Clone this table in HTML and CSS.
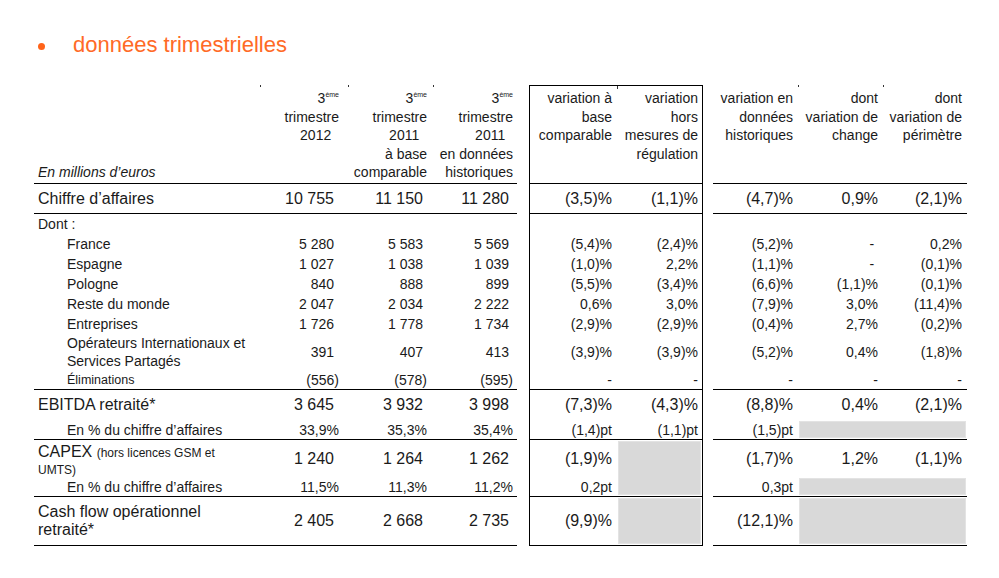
FILE: index.html
```html
<!DOCTYPE html>
<html lang="fr">
<head>
<meta charset="utf-8">
<title>données trimestrielles</title>
<link rel="stylesheet" href="styles.css">
</head>
<body>
<div class="title"><span class="bullet"></span><h1>données trimestrielles</h1></div>
<table class="fin">
  <colgroup>
    <col class="w-label"><col class="w-c1"><col class="w-c2"><col class="w-c3"><col class="w-gap1"><col class="w-c4"><col class="w-c5"><col class="w-gap2"><col class="w-c6"><col class="w-c7"><col class="w-c8">
  </colgroup>
  <thead>
    <tr class="hd rule">
      <th class="lbl"><em>En millions d’euros</em></th>
      <th class="c1 tick">3<sup>ème</sup><br>trimestre<br>2012&nbsp;&nbsp;</th>
      <th class="c2 tick">3<sup>ème</sup><br>trimestre<br>2011&nbsp;&nbsp;<br>à base<br>comparable</th>
      <th class="c3 tick">3<sup>ème</sup><br>trimestre<br>2011&nbsp;&nbsp;<br>en données<br>historiques</th>
      <th class="gap"></th>
      <th class="c4 box">variation à<br>base<br>comparable</th>
      <th class="c5 box tick">variation<br>hors<br>mesures de<br>régulation</th>
      <th class="gap"></th>
      <th class="c6">variation en<br>données<br>historiques</th>
      <th class="c7 tick">dont<br>variation de<br>change</th>
      <th class="c8 tick">dont<br>variation de<br>périmètre</th>
    </tr>
  </thead>
  <tbody>
    <tr class="big r30 rule">
      <td class="lbl">Chiffre d’affaires</td>
      <td class="c1">10 755</td><td class="c2">11 150</td><td class="c3">11 280</td><td class="gap"></td>
      <td class="c4">(3,5)%</td><td class="c5">(1,1)%</td><td class="gap"></td>
      <td class="c6">(4,7)%</td><td class="c7">0,9%</td><td class="c8">(2,1)%</td>
    </tr>
    <tr class="r20">
      <td class="lbl">Dont :</td>
      <td class="c1"></td><td class="c2"></td><td class="c3"></td><td class="gap"></td>
      <td class="c4"></td><td class="c5"></td><td class="gap"></td>
      <td class="c6"></td><td class="c7"></td><td class="c8"></td>
    </tr>
    <tr class="r20">
      <td class="lbl ind">France</td>
      <td class="c1">5 280</td><td class="c2">5 583</td><td class="c3">5 569</td><td class="gap"></td>
      <td class="c4">(5,4)%</td><td class="c5">(2,4)%</td><td class="gap"></td>
      <td class="c6">(5,2)%</td><td class="c7">-&nbsp;</td><td class="c8">0,2%</td>
    </tr>
    <tr class="r20">
      <td class="lbl ind">Espagne</td>
      <td class="c1">1 027</td><td class="c2">1 038</td><td class="c3">1 039</td><td class="gap"></td>
      <td class="c4">(1,0)%</td><td class="c5">2,2%</td><td class="gap"></td>
      <td class="c6">(1,1)%</td><td class="c7">-&nbsp;</td><td class="c8">(0,1)%</td>
    </tr>
    <tr class="r20">
      <td class="lbl ind">Pologne</td>
      <td class="c1">840</td><td class="c2">888</td><td class="c3">899</td><td class="gap"></td>
      <td class="c4">(5,5)%</td><td class="c5">(3,4)%</td><td class="gap"></td>
      <td class="c6">(6,6)%</td><td class="c7">(1,1)%</td><td class="c8">(0,1)%</td>
    </tr>
    <tr class="r20">
      <td class="lbl ind">Reste du monde</td>
      <td class="c1">2 047</td><td class="c2">2 034</td><td class="c3">2 222</td><td class="gap"></td>
      <td class="c4">0,6%</td><td class="c5">3,0%</td><td class="gap"></td>
      <td class="c6">(7,9)%</td><td class="c7">3,0%</td><td class="c8">(11,4)%</td>
    </tr>
    <tr class="r20">
      <td class="lbl ind">Entreprises</td>
      <td class="c1">1 726</td><td class="c2">1 778</td><td class="c3">1 734</td><td class="gap"></td>
      <td class="c4">(2,9)%</td><td class="c5">(2,9)%</td><td class="gap"></td>
      <td class="c6">(0,4)%</td><td class="c7">2,7%</td><td class="c8">(0,2)%</td>
    </tr>
    <tr class="r36">
      <td class="lbl ind">Opérateurs Internationaux et<br>Services Partagés</td>
      <td class="c1">391</td><td class="c2">407</td><td class="c3">413</td><td class="gap"></td>
      <td class="c4">(3,9)%</td><td class="c5">(3,9)%</td><td class="gap"></td>
      <td class="c6">(5,2)%</td><td class="c7">0,4%</td><td class="c8">(1,8)%</td>
    </tr>
    <tr class="r20 rule">
      <td class="lbl ind small">Éliminations</td>
      <td class="c1 h">(556)</td><td class="c2 h">(578)</td><td class="c3 h">(595)</td><td class="gap"></td>
      <td class="c4">-</td><td class="c5">-</td><td class="gap"></td>
      <td class="c6">-</td><td class="c7">-</td><td class="c8">-</td>
    </tr>
    <tr class="big r30">
      <td class="lbl">EBITDA retraité*</td>
      <td class="c1">3 645</td><td class="c2">3 932</td><td class="c3">3 998</td><td class="gap"></td>
      <td class="c4">(7,3)%</td><td class="c5">(4,3)%</td><td class="gap"></td>
      <td class="c6">(8,8)%</td><td class="c7">0,4%</td><td class="c8">(2,1)%</td>
    </tr>
    <tr class="r20 rule">
      <td class="lbl ind">En % du chiffre d’affaires</td>
      <td class="c1 h">33,9%</td><td class="c2 h">35,3%</td><td class="c3 h">35,4%</td><td class="gap"></td>
      <td class="c4">(1,4)pt</td><td class="c5">(1,1)pt</td><td class="gap"></td>
      <td class="c6">(1,5)pt</td><td class="grey" colspan="2"></td>
    </tr>
    <tr class="big r37">
      <td class="lbl capex">CAPEX <small>(hors licences GSM et<br>UMTS)</small></td>
      <td class="c1">1 240</td><td class="c2">1 264</td><td class="c3">1 262</td><td class="gap"></td>
      <td class="c4">(1,9)%</td><td class="c5 grey rb" rowspan="2"></td><td class="gap"></td>
      <td class="c6">(1,7)%</td><td class="c7">1,2%</td><td class="c8">(1,1)%</td>
    </tr>
    <tr class="r20 rule">
      <td class="lbl ind">En % du chiffre d’affaires</td>
      <td class="c1 h">11,5%</td><td class="c2 h">11,3%</td><td class="c3 h">11,2%</td><td class="gap"></td>
      <td class="c4">0,2pt</td><td class="gap"></td>
      <td class="c6">0,3pt</td><td class="grey" colspan="2"></td>
    </tr>
    <tr class="big r49 rule">
      <td class="lbl">Cash flow opérationnel<br>retraité*</td>
      <td class="c1">2 405</td><td class="c2">2 668</td><td class="c3">2 735</td><td class="gap"></td>
      <td class="c4">(9,9)%</td><td class="c5 grey"></td><td class="gap"></td>
      <td class="c6">(12,1)%</td><td class="grey" colspan="2"></td>
    </tr>
  </tbody>
</table>
</body>
</html>
```

FILE: styles.css
```css
* { box-sizing: border-box; }
html, body { margin: 0; padding: 0; background: #fff; }
body {
  width: 999px;
  height: 578px;
  overflow: hidden;
  font-family: "Liberation Sans", Arial, Helvetica, sans-serif;
  color: #1a1a1a;
}

.title {
  display: flex;
  align-items: flex-start;
  height: 85px;
  padding: 32px 0 0 38px;
}
.bullet {
  width: 7px;
  height: 7px;
  border-radius: 50%;
  background: #ff6319;
  margin: 10.5px 28px 0 0;
  flex: none;
}
.title h1 {
  margin: 0;
  font-size: 22px;
  line-height: 26px;
  font-weight: normal;
  color: #ff6a26;
}

.fin {
  border-collapse: separate;
  border-spacing: 0;
  table-layout: fixed;
  width: 933px;
  margin-left: 34px;
  font-size: 14px;
  line-height: 18px;
}
.w-label { width: 226px; }
.w-c1 { width: 88px; }
.w-c2 { width: 85px; }
.w-c3 { width: 84px; }
.w-gap1 { width: 12px; }
.w-c4 { width: 88px; }
.w-c5 { width: 86px; }
.w-gap2 { width: 10px; }
.w-c6 { width: 85px; }
.w-c7 { width: 85px; }
.w-c8 { width: 84px; }

.fin th, .fin td {
  padding: 0;
  font-weight: normal;
  text-align: right;
  vertical-align: middle;
  white-space: nowrap;
}

/* header */
.fin tr.hd { height: 99px; }
.fin tr.hd th { vertical-align: top; padding-top: 4px; line-height: 18.5px; position: relative; }
.fin tr.hd th.box { padding-top: 3px; border-top: 1px solid #000; }
.fin tr.hd th.lbl { vertical-align: bottom; padding-bottom: 2px; }
.fin th sup { font-size: 7px; line-height: 0; vertical-align: 6px; }
.fin em { font-style: italic; }

/* small column-boundary ticks at the top of the table */
.fin th.tick::before {
  content: "";
  position: absolute;
  left: 0;
  top: 0;
  width: 1px;
  height: 2px;
  background: #333;
}
.fin th.box.tick::before { top: 0; height: 3px; }

/* row heights */
.fin tr.r20 { height: 20px; }
.fin tr.r30 { height: 30px; }
.fin tr.r36 { height: 36px; }
.fin tr.r37 { height: 37px; }
.fin tr.r49 { height: 49px; }

.fin tr.big td { font-size: 16px; }

/* label column */
.fin .lbl { text-align: left; padding-left: 4px; }
.fin .lbl.ind { padding-left: 33px; }
.fin .lbl.small { font-size: 12.5px; }
.fin .lbl.capex { line-height: 17px; padding-top: 2px; }
.fin .lbl.capex small { font-size: 12px; line-height: 12px; }

/* numeric columns: right padding, with hanging ) and % */
.fin .c1 { padding-right: 14px; }
.fin .c2 { padding-right: 10px; }
.fin .c3 { padding-right: 8px; }
.fin th.c1, .fin .c1.h { padding-right: 9px; }
.fin th.c2, .fin .c2.h { padding-right: 6px; }
.fin th.c3, .fin .c3.h { padding-right: 4px; }
.fin .c4 { padding-right: 5px; border-left: 1px solid #000; }
.fin .c5 { padding-right: 4px; border-right: 1px solid #000; }
.fin .c6 { padding-right: 5px; }
.fin .c7 { padding-right: 5px; }
.fin .c8 { padding-right: 5px; }

/* rules */
.fin tr.rule > th:not(.gap),
.fin tr.rule > td:not(.gap),
.fin td.rb { border-bottom: 1px solid #000; }

.fin td.grey {
  background: #d9d9d9;
  box-shadow: inset 0 0 0 1px #fff, inset 0 0 0 2px #e3e3e3;
}
```
